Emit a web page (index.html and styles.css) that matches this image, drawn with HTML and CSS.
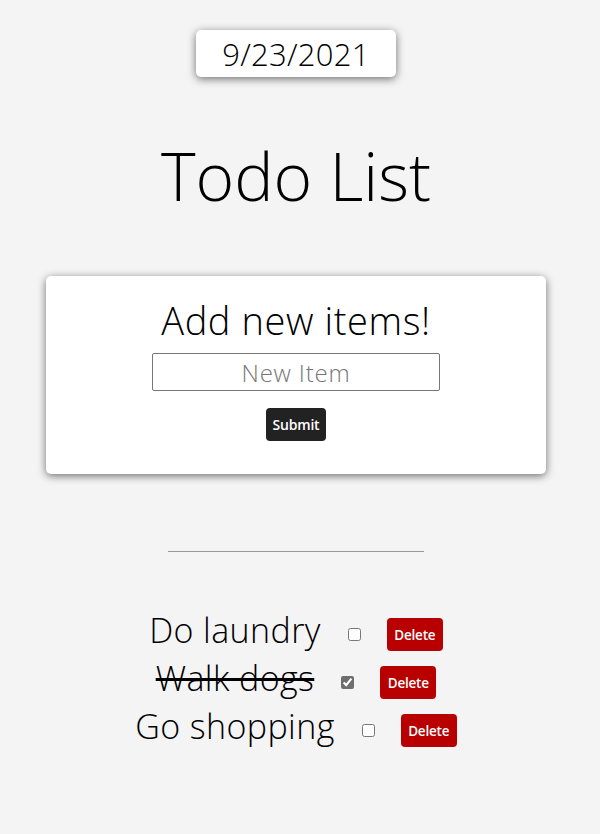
FILE: index.html
```html
<!DOCTYPE html>
<html>
<head>
<meta charset="utf-8">
<link rel="stylesheet" href="styles.css">
</head>
<body>
<main class="page">
  <div class="date">9/23/2021</div>
  <h1 class="title">Todo List</h1>
  <section class="card">
    <h2 class="card-title">Add new items!</h2>
    <input class="new-item" type="text" placeholder="New Item">
    <button class="submit">Submit</button>
  </section>
  <hr class="divider">
  <ul class="list">
    <li class="item"><span class="label">Do laundry</span><input class="check" type="checkbox"><button class="delete">Delete</button></li>
    <li class="item"><span class="label done">Walk dogs</span><input class="check" type="checkbox" checked><button class="delete">Delete</button></li>
    <li class="item"><span class="label">Go shopping</span><input class="check" type="checkbox"><button class="delete">Delete</button></li>
  </ul>
</main>
</body>
</html>
```
FILE: styles.css
```css
* { box-sizing: border-box; }
html, body { margin: 0; padding: 0; }
body {
  background: #f4f4f4;
  font-family: "Open Sans", "Liberation Sans", sans-serif;
  font-weight: 300;
  color: #000;
}
.page {
  display: flex;
  flex-direction: column;
  align-items: center;
  padding-top: 30px;
}
.date {
  width: 200px;
  height: 47px;
  margin-left: -8px;
  background: #fff;
  border-radius: 5px;
  box-shadow: 0 2px 8px rgba(0,0,0,0.55);
  display: flex;
  align-items: center;
  justify-content: center;
  font-size: 31px;
  font-weight: 300;
  letter-spacing: 0.3px;
}
.title {
  margin: 53px 0 7px -8px;
  font-size: 66px;
  font-weight: 300;
  line-height: 90px;
  height: 90px;
}
.card {
  margin-top: 49px;
  margin-left: -8px;
  width: 500px;
  height: 198px;
  background: #fff;
  border-radius: 5px;
  box-shadow: 0 2px 8px rgba(0,0,0,0.55);
  display: flex;
  flex-direction: column;
  align-items: center;
  padding-top: 20px;
}
.card-title {
  margin: 0;
  font-size: 38px;
  font-weight: 300;
  line-height: 48px;
  letter-spacing: 0.6px;
}
.new-item {
  margin-top: 9px;
  width: 288px;
  height: 38px;
  border: 1px solid #767676;
  border-radius: 2px;
  text-align: center;
  font-family: "Open Sans", sans-serif;
  font-weight: 300;
  font-size: 24px;
  letter-spacing: 0.8px;
  color: #000;
  background: #fff;
}
.new-item::placeholder { color: #757575; }
.submit {
  margin-top: 17px;
  width: 60px;
  height: 33px;
  border: none;
  border-radius: 4px;
  background: #222;
  color: #fff;
  font-family: "Open Sans", sans-serif;
  font-weight: 600;
  font-size: 14px;
  padding: 0;
  letter-spacing: -0.2px;
}
.divider {
  margin: 77px 0 0 -8px;
  width: 256px;
  border: none;
  border-top: 1px solid #999;
  height: 0;
}
.list {
  list-style: none;
  margin: 66px 0 0 -8px;
  padding: 0;
  display: flex;
  flex-direction: column;
  align-items: center;
  gap: 15px;
}
.item {
  display: flex;
  align-items: center;
  height: 33px;
}
.label {
  font-size: 34px;
  font-weight: 300;
  line-height: 33px;
  margin-top: -8px;
  letter-spacing: 0.4px;
}
.label.done { text-decoration: line-through; text-decoration-thickness: 3px; }
.check {
  margin: 0 26px 0 27px;
  width: 13px;
  height: 13px;
  accent-color: #6e6e6e;
}
.delete {
  width: 56px;
  height: 33px;
  border: none;
  border-radius: 4px;
  background: #b80000;
  color: #fff;
  font-family: "Open Sans", sans-serif;
  font-weight: 600;
  font-size: 13.5px;
  padding: 0;
  letter-spacing: -0.2px;
}
```
